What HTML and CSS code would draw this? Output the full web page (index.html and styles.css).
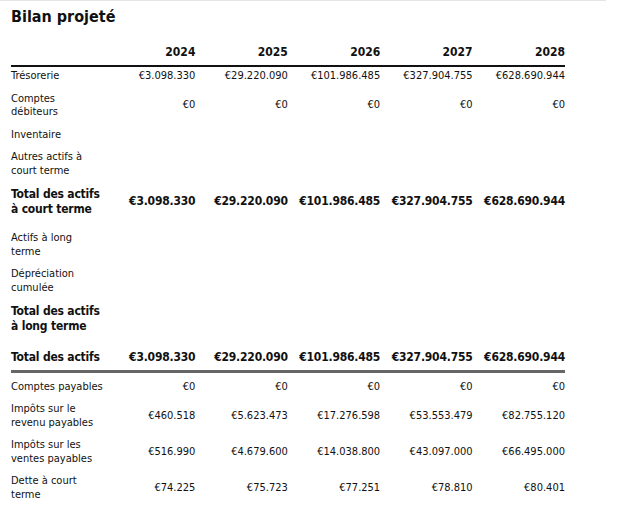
FILE: index.html
```html
<!DOCTYPE html>
<html lang="fr">
<head>
<meta charset="utf-8">
<link rel="stylesheet" href="styles.css">
</head>
<body>
<div class="page">
  <h1 class="title">Bilan projeté</h1>
  <table class="sheet">
    <colgroup>
      <col class="c-label"><col><col><col><col><col>
    </colgroup>
    <thead>
      <tr class="head">
        <th></th><th>2024</th><th>2025</th><th>2026</th><th>2027</th><th>2028</th>
      </tr>
    </thead>
    <tbody>
      <tr class="row first">
        <td>Trésorerie</td><td>€3.098.330</td><td>€29.220.090</td><td>€101.986.485</td><td>€327.904.755</td><td>€628.690.944</td>
      </tr>
      <tr class="row">
        <td>Comptes<br>débiteurs</td><td>€0</td><td>€0</td><td>€0</td><td>€0</td><td>€0</td>
      </tr>
      <tr class="row">
        <td>Inventaire</td><td></td><td></td><td></td><td></td><td></td>
      </tr>
      <tr class="row">
        <td>Autres actifs à<br>court terme</td><td></td><td></td><td></td><td></td><td></td>
      </tr>
      <tr class="total">
        <td>Total des actifs<br>à court terme</td><td>€3.098.330</td><td>€29.220.090</td><td>€101.986.485</td><td>€327.904.755</td><td>€628.690.944</td>
      </tr>
      <tr class="row">
        <td>Actifs à long<br>terme</td><td></td><td></td><td></td><td></td><td></td>
      </tr>
      <tr class="row">
        <td>Dépréciation<br>cumulée</td><td></td><td></td><td></td><td></td><td></td>
      </tr>
      <tr class="total">
        <td>Total des actifs<br>à long terme</td><td></td><td></td><td></td><td></td><td></td>
      </tr>
      <tr class="total grand">
        <td>Total des actifs</td><td>€3.098.330</td><td>€29.220.090</td><td>€101.986.485</td><td>€327.904.755</td><td>€628.690.944</td>
      </tr>
      <tr class="row after-grand">
        <td>Comptes payables</td><td>€0</td><td>€0</td><td>€0</td><td>€0</td><td>€0</td>
      </tr>
      <tr class="row">
        <td>Impôts sur le<br>revenu payables</td><td>€460.518</td><td>€5.623.473</td><td>€17.276.598</td><td>€53.553.479</td><td>€82.755.120</td>
      </tr>
      <tr class="row">
        <td>Impôts sur les<br>ventes payables</td><td>€516.990</td><td>€4.679.600</td><td>€14.038.800</td><td>€43.097.000</td><td>€66.495.000</td>
      </tr>
      <tr class="row">
        <td>Dette à court<br>terme</td><td>€74.225</td><td>€75.723</td><td>€77.251</td><td>€78.810</td><td>€80.401</td>
      </tr>
    </tbody>
  </table>
</div>
</body>
</html>
```
FILE: styles.css
```css
html, body {
  margin: 0;
  padding: 0;
  background: #ffffff;
}
body {
  font-family: "DejaVu Sans Condensed", "DejaVu Sans", sans-serif;
  color: #111111;
  overflow: hidden;
}
.page {
  width: 606px;
  border-top: 1px solid #e4e4e4;
  padding: 0 11px;
  box-sizing: border-box;
}
.title {
  margin: 5px 0 0;
  font-size: 16px;
  line-height: 22px;
  font-weight: bold;
  color: #111;
}
.sheet {
  width: 554px;
  border-collapse: collapse;
  table-layout: fixed;
  margin-top: 16px;
}
.c-label { width: 92px; }
.sheet th, .sheet td {
  padding: 0;
  text-align: right;
  vertical-align: middle;
  white-space: nowrap;
}
.sheet th:first-child, .sheet td:first-child {
  text-align: left;
}
.head th {
  font-size: 12px;
  font-weight: bold;
  line-height: 16px;
  padding-bottom: 5px;
  border-bottom: 2px solid #111;
}
.row td {
  font-size: 11px;
  line-height: 13.5px;
  padding: 4.5px 0;
}
.row.first td { padding-top: 2px; }
.total td {
  font-size: 12px;
  letter-spacing: -0.2px;
  font-weight: bold;
  line-height: 15px;
  padding: 5px 0 10px;
}
.total.grand td {
  padding: 6px 0 5px;
  border-bottom: 3px solid #666;
}
.row.after-grand td { padding-top: 7px; }
```
